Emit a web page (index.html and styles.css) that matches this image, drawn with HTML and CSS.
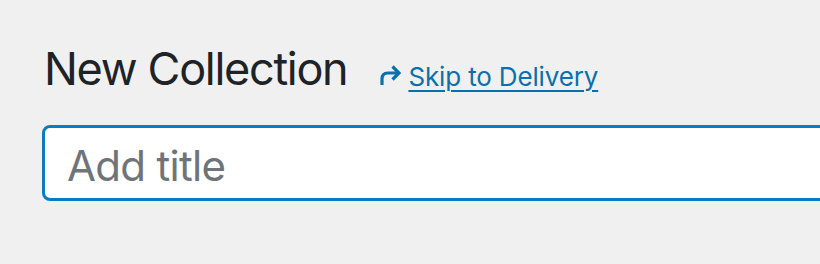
FILE: index.html
```html
<!DOCTYPE html>
<html>
<head>
<meta charset="utf-8">
<link rel="stylesheet" href="styles.css">
</head>
<body>
<div class="wrap">
  <div class="head">
    <h1 class="title">New Collection</h1>
    <a class="skip" href="#">
      <svg class="skip-icon" width="22" height="20" viewBox="0 0 22 20" fill="none" stroke="currentColor" stroke-width="3.2" stroke-linecap="butt" stroke-linejoin="miter">
        <path d="M3 20 V14 Q3 8 9 8 H19.5"/>
        <path d="M13.5 1.5 L20 8 L13.5 14.5"/>
      </svg>
      <span class="skip-text">Skip to Delivery</span>
    </a>
  </div>
  <div class="field">
    <input class="title-input" type="text" placeholder="Add title">
  </div>
</div>
</body>
</html>
```
FILE: styles.css
```css
html, body {
  margin: 0;
  padding: 0;
  background: #f0f0f1;
}
.wrap {
  padding: 41px 0 0 44px;
  font-family: Inter, "Liberation Sans", sans-serif;
}
.head {
  display: flex;
  align-items: baseline;
  gap: 32px;
}
.title {
  margin: 0;
  font-size: 45px;
  font-weight: 400;
  letter-spacing: -1.3px;
  color: #1d2327;
  line-height: 56px;
}
.skip {
  display: flex;
  align-items: center;
  gap: 7px;
  color: #0a70ac;
  font-size: 26px;
  letter-spacing: -0.15px;
  text-decoration: none;
}
.skip-icon {
  display: block;
  margin-bottom: 3px;
}
.skip-text {
  text-decoration: underline;
  text-decoration-thickness: 2px;
  text-underline-offset: 4px;
}
.field {
  margin-top: 28px;
  width: 900px;
}
.title-input {
  box-sizing: border-box;
  width: 100%;
  height: 76px;
  margin: 0 0 0 -2px;
  padding: 4px 22px 0;
  border: 3px solid #0a7cc0;
  border-radius: 8px;
  background: #fff;
  font-family: Inter, "Liberation Sans", sans-serif;
  font-size: 42px;
  letter-spacing: -0.7px;
  color: #1d2327;
  outline: none;
}
.title-input::placeholder {
  color: #6f7479;
  opacity: 1;
}
```
